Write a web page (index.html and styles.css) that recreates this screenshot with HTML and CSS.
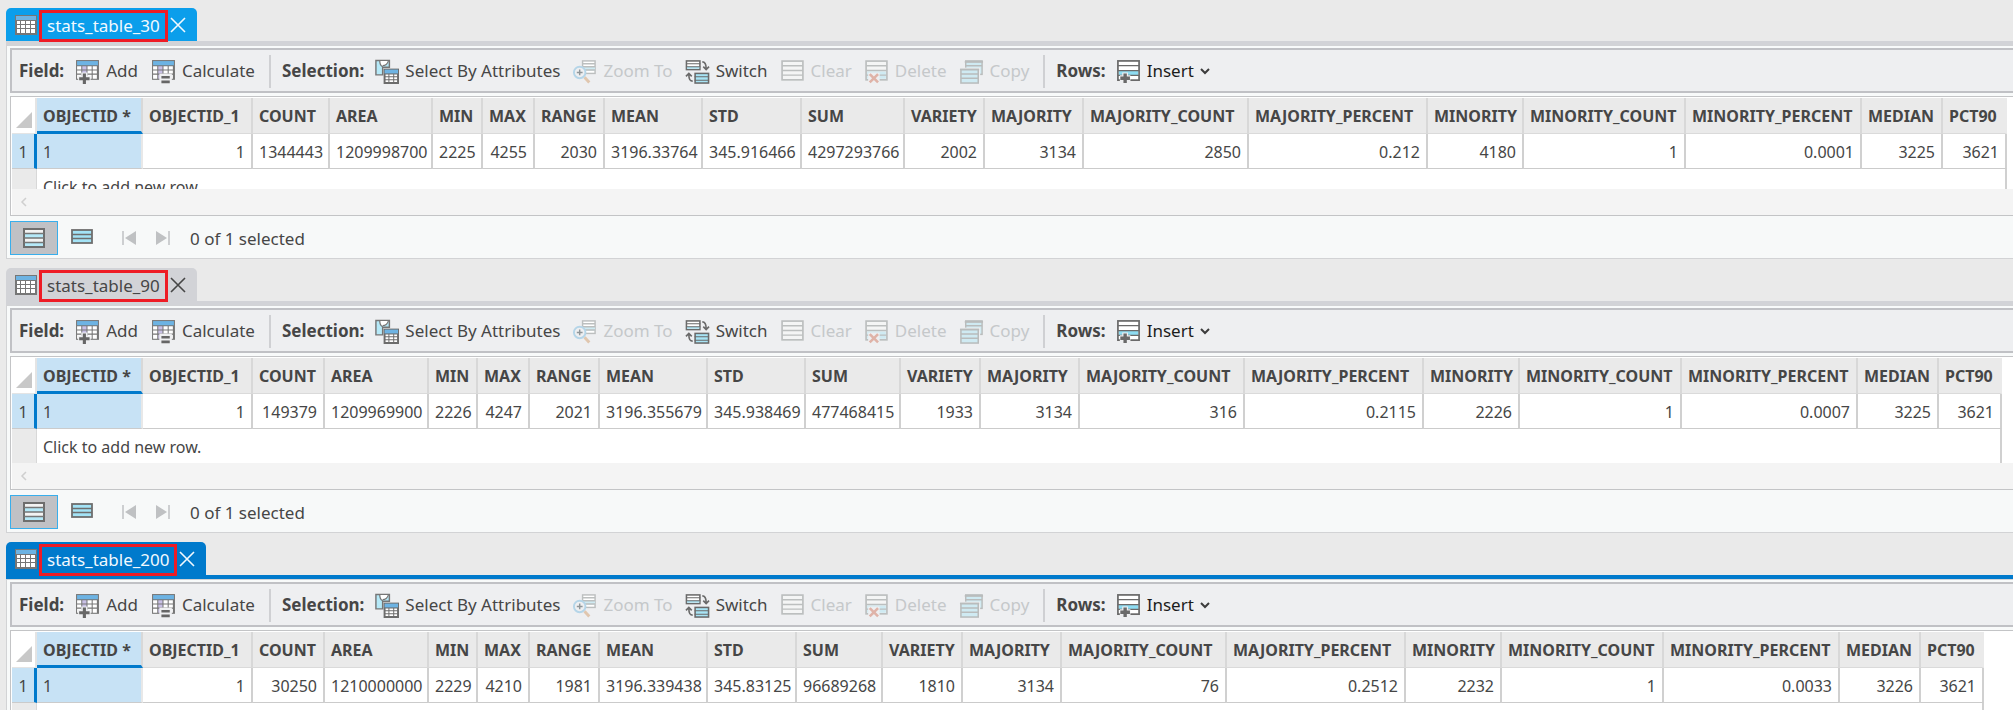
FILE: index.html
```html
<!DOCTYPE html>
<html lang="en">
<head>
<meta charset="utf-8">
<title>Attribute tables</title>
<link rel="stylesheet" href="styles.css">
</head>
<body>
<svg class="sprite" aria-hidden="true">
  <symbol id="i-table" viewBox="0 0 24 20">
    <rect x="1" y="0" width="22" height="20" fill="#767676"/>
    <rect x="2" y="1" width="20" height="4" fill="#6db3e3"/>
    <path d="M3 6h3v3H3zM7 6h4v3H7zM12 6h4v3h-4zM17 6h4v3h-4zM3 10h3v3H3zM7 10h4v3H7zM12 10h4v3h-4zM17 10h4v3h-4zM3 14h3v4H3zM7 14h4v4H7zM12 14h4v4h-4zM17 14h4v4h-4z" fill="#fff"/>
  </symbol>
  <symbol id="i-field" viewBox="0 0 24 24">
    <rect x="1" y="1" width="22" height="19" fill="#767676"/>
    <rect x="2" y="2" width="20" height="4" fill="#6db3e3"/>
    <path d="M2 7h4v3H2zM12 7h4v3h-4zM17 7h4v3h-4zM2 11h4v3H2zM12 11h4v3h-4zM17 11h4v3h-4zM2 15h4v4H2zM12 15h4v4h-4zM17 15h4v4h-4z" fill="#fff"/>
    <path d="M7 7h4v3H7zM7 11h4v3H7zM7 15h4v4H7z" fill="#c9c0e6"/>
  </symbol>
  <symbol id="i-add" viewBox="0 0 24 24">
    <use href="#i-field"/>
    <path d="M9 13v11M3 19h12" stroke="#eeeff1" stroke-width="6"/>
    <path d="M9 14v10M4 19h10" stroke="#666" stroke-width="3"/>
  </symbol>
  <symbol id="i-calc" viewBox="0 0 24 24">
    <use href="#i-field"/>
    <path d="M8 14h12v10H8z" fill="#eeeff1"/>
    <path d="M10 17.500h8M10 22h8" stroke="#666" stroke-width="2.500"/>
  </symbol>
  <symbol id="i-select" viewBox="0 0 26 26">
    <path d="M2 1.500h14v7H9v8H2z" fill="#b5e9f8" stroke="#767676" stroke-width="1.500"/>
    <path d="M6 2c0 5 3 6 5 5s4-2 4-5z" fill="#fff"/>
    <path d="M6 2c0 3 1 5 3 6M9 7c3 0 5-2 6-5" fill="none" stroke="#767676" stroke-width="1.300"/>
    <rect x="10" y="10" width="16" height="16" fill="#6c6c6c"/>
    <rect x="11" y="11" width="14" height="4" fill="#6db3e3"/>
    <path d="M12 16h3v2h-3zM16 16h4v2h-4zM21 16h3v2h-3zM12 19h3v2h-3zM16 19h4v2h-4zM21 19h3v2h-3zM12 22h3v2h-3zM16 22h4v2h-4zM21 22h3v2h-3z" fill="#fff"/>
  </symbol>
  <symbol id="i-zoom" viewBox="0 0 26 26">
    <rect x="11" y="2" width="13" height="13" fill="#fff" stroke="#bcbfbf" stroke-width="1.500"/>
    <path d="M11 8h13v4H11z" fill="#cfeaf2"/>
    <path d="M11 5h13M11 8h13M11 11.500h13" stroke="#bcbfbf" stroke-width="1.500"/>
    <circle cx="8" cy="14" r="6" fill="#eeeff1" stroke="#b5d5e8" stroke-width="2"/>
    <path d="M8 11v6M5 14h6" stroke="#8f9699" stroke-width="1.500"/>
    <path d="M13 19l5 5.500" stroke="#e0c6ae" stroke-width="3"/>
  </symbol>
  <symbol id="i-switch" viewBox="0 0 26 26">
    <rect x="1.500" y="2" width="14" height="9" fill="#fff" stroke="#6a6a6a" stroke-width="1.600"/>
    <path d="M2 8h13v2H2z" fill="#a8e4f5"/>
    <path d="M1 5h15M1 8h15" stroke="#6a6a6a" stroke-width="1.100"/>
    <rect x="10.500" y="15" width="14" height="10" fill="#a8e4f5" stroke="#6a6a6a" stroke-width="1.600"/>
    <path d="M10 18.500h15M10 22h15" stroke="#6a6a6a" stroke-width="1.100"/>
    <path d="M18 3c3 0 4 2 4 7M19 8l3 3 3-3M8 23c-3 0-4-2-4-7M1 18l3-3 3 3" fill="none" stroke="#6a6a6a" stroke-width="1.700"/>
  </symbol>
  <symbol id="i-clear" viewBox="0 0 24 24">
    <rect x="2" y="2" width="20" height="18" fill="#f4f5f5" stroke="#bcbfbf" stroke-width="1.600"/>
    <path d="M2 6.500h20M2 11h20M2 15.500h20" stroke="#bcbfbf" stroke-width="1.300"/>
  </symbol>
  <symbol id="i-delete" viewBox="0 0 24 24">
    <rect x="2" y="2" width="20" height="18" fill="#f4f5f5" stroke="#bcbfbf" stroke-width="1.600"/>
    <path d="M3 12h18v7H3z" fill="#cfeaf2"/>
    <path d="M2 6.500h20M2 11h20M2 15.500h20" stroke="#bcbfbf" stroke-width="1.300"/>
    <path d="M4 13h11v11H4z" fill="#eeeff1"/>
    <path d="M5.500 14.500l8 8M13.500 14.500l-8 8" stroke="#dfb3a8" stroke-width="2.500"/>
  </symbol>
  <symbol id="i-copy" viewBox="0 0 26 26">
    <rect x="7" y="2" width="17" height="14" fill="#cfeaf2" stroke="#b9bcbc" stroke-width="1.500"/>
    <path d="M6 3h19" stroke="#b9bcbc" stroke-width="2"/>
    <path d="M7 7h17" stroke="#b9bcbc" stroke-width="1.500"/>
    <rect x="0" y="9" width="22" height="17" fill="#eeeff1"/>
    <rect x="2" y="11" width="18" height="14" fill="#cfeaf2" stroke="#b9bcbc" stroke-width="1.600"/>
    <path d="M1 11h20M2 15.500h18M2 20h18" stroke="#b9bcbc" stroke-width="1.600"/>
  </symbol>
  <symbol id="i-insert" viewBox="0 0 26 26">
    <rect x="2" y="2" width="22" height="20" fill="#fff" stroke="#6a6a6a" stroke-width="1.800"/>
    <path d="M3 12.500h20v4.500H3z" fill="#8edcf2"/>
    <path d="M2 7h22M2 12h22M2 17h22" stroke="#6a6a6a" stroke-width="1.300"/>
    <path d="M9.500 14v12M4 20h11" stroke="#eeeff1" stroke-width="6"/>
    <path d="M9.500 15v10M4.500 20h10" stroke="#6a6a6a" stroke-width="3.500"/>
  </symbol>
  <symbol id="i-all" viewBox="0 0 24 20">
    <rect x="2" y="1" width="20" height="18" fill="#f3f3f3" stroke="#6e6e6e" stroke-width="2"/>
    <path d="M3 6h18v4H3zM3 15h18v3H3z" fill="#b5e9f8"/>
    <path d="M2 5.500h20M2 10h20M2 14.500h20" stroke="#767676" stroke-width="1.300"/>
  </symbol>
  <symbol id="i-selected" viewBox="0 0 24 20">
    <rect x="2" y="2" width="20" height="13" fill="#a3e3f6" stroke="#6e6e6e" stroke-width="1.800"/>
    <path d="M2 6.500h20M2 10.500h20" stroke="#6e6e6e" stroke-width="1.300"/>
  </symbol>
  <symbol id="i-first" viewBox="0 0 16 16">
    <path d="M15 1v14L4 8z" fill="#bfc1c3"/><path d="M2 1v14" stroke="#bfc1c3" stroke-width="1.500"/>
  </symbol>
  <symbol id="i-last" viewBox="0 0 16 16">
    <path d="M1 1v14l11-7z" fill="#bfc1c3"/><path d="M14 1v14" stroke="#bfc1c3" stroke-width="1.500"/>
  </symbol>
  <symbol id="i-close" viewBox="0 0 16 16">
    <path d="M1 1l14 14M15 1L1 15" stroke="currentColor" stroke-width="1.600"/>
  </symbol>
  <symbol id="i-down" viewBox="0 0 10 8">
    <path d="M1 2l4 4 4-4" fill="none" stroke="#3c3c3c" stroke-width="2"/>
  </symbol>
  <symbol id="i-left" viewBox="0 0 8 10">
    <path d="M6 1L2 5l4 4" fill="none" stroke="#cfcfcf" stroke-width="1.500"/>
  </symbol>
</svg>
<main class="views" id="views"></main>
<script src="script.js"></script>
</body>
</html>
```

FILE: styles.css
```css
* { box-sizing: border-box; }

body {
  margin: 0;
  padding: 8px 0 0 6px;
  height: 100vh;
  overflow: hidden;
  background: #eaeaea;
  color: #464646;
  font: 16px/22px "Noto Sans", "Open Sans", sans-serif;
}

button {
  border: 0;
  padding: 0;
  background: none;
  color: inherit;
  font: inherit;
}

svg { display: block; flex: none; }
.sprite { position: absolute; width: 0; height: 0; }

.views { display: flex; flex-direction: column; gap: 9px; height: 100%; }
.view { flex: none; }
.view:last-child { flex: 1; min-height: 0; overflow: hidden; }

/* Tab */
.tab {
  display: inline-flex;
  align-items: center;
  height: 33px;
  padding: 1px 11px 0 8px;
  border-radius: 5px 5px 0 0;
  background: #d2d3d7;
  vertical-align: top;
}
.tab-name {
  position: relative;
  margin: 2px 10px 0 9px;
  font-size: 17px;
  line-height: 24px;
}
.tab-name::after {
  content: "";
  position: absolute;
  inset: -4px -8px;
  border: 3px solid #ee1c25;
}
.tab-icon { width: 24px; height: 20px; }
.tab-close svg { width: 16px; height: 16px; }
.tab-strip { height: 4px; background: #d2d3d7; }
.is-hot .tab { background: #0b9eeb; color: #f2f9fe; }
.is-active .tab { background: #007acc; color: #f2f9fe; }
.is-active .tab-strip { background: #007acc; }

/* Panel */
.panel {
  padding: 2px 0 0 3px;
  border: 1px solid #d2d3d5;
  border-right: 0;
  background: #f8fafa;
}
.toolbar {
  display: flex;
  align-items: center;
  height: 45px;
  padding: 1px 0 0 7px;
  border: 2px solid #c0c1c5;
  border-right: 0;
  background: #eeeff1;
  font-size: 17px;
  white-space: nowrap;
}
.group { display: flex; align-items: center; gap: 13px; }
.group + .group {
  gap: 12px;
  margin-left: 14px;
  padding: 4px 0 4px 11px;
  border-left: 2px solid #cfd0d3;
}
.group-name { font-weight: 700; margin-right: -2px; }
.tool { display: flex; align-items: center; gap: 6px; }
.tool svg { width: 25px; height: 25px; }
.tool .arrow { width: 10px; height: 8px; }
.tool:disabled { color: #c5c8ca; }
.tool-dark { color: #1c1c1c; }

/* Grid */
.grid {
  margin-top: 3px;
  padding: 1px 0 0 1px;
  border: 1px solid #c3c4c6;
  border-right: 0;
  background: #fff;
}
.rows { height: 91px; overflow: hidden; }
.is-tall .rows { height: 105px; }
table { border-collapse: separate; border-spacing: 0; table-layout: fixed; width: 0; }
th, td {
  height: 35px;
  padding: 1px 6px 0;
  border-right: 1px solid #d0d0d0;
  border-bottom: 1px solid #cbcbcb;
  text-align: right;
  white-space: nowrap;
}
td { border-right-width: 2px; }
thead th {
  height: 36px;
  background: #eaeaea;
  border-bottom-color: #dadada;
  border-right: 2px solid #d8d8d8;
  text-align: left;
  font-weight: 700;
}
thead th:last-child { border-right-color: #eaeaea; }
thead .corner { background: #fff; padding: 0 4px 5px; vertical-align: bottom; border-color: #e4e4e4; }
.corner svg { margin-left: auto; width: 16px; height: 16px; }
thead .current { background: #c7e2f5; padding-top: 3px; border-bottom: 3px solid #007acc; }
td.current { background: #c7e2f5; text-align: left; border-right-color: #e8e8e8; }
tbody th {
  padding: 1px 0 0;
  border-right: 3px solid #007acc;
  background: #c7e2f5;
  text-align: center;
  font-weight: 400;
}
tbody .blank { background: #eaeaea; border-right: 1px solid #d8d8d8; }
td.new-row { text-align: left; }
.scroll { display: flex; align-items: center; height: 26px; padding-left: 8px; background: #f4f4f4; }
.scroll svg { width: 8px; height: 10px; }

/* Footer */
.footer { display: flex; align-items: center; padding: 5px 0 3px; background: #f7f9f9; }
.mode { display: grid; place-items: center; width: 48px; height: 34px; }
.mode svg { width: 24px; height: 20px; }
.mode[aria-pressed="true"] { border: 1px solid #38aeec; background: #c0c1c5; }
.nav { margin-left: 18px; }
.nav svg { width: 16px; height: 16px; }
.mode + .nav { margin-left: 15px; }
.count { margin: 2px 0 0 19px; font-size: 17px; }
```

FILE: script.js
```js
const FIELDS = ["OBJECTID *", "OBJECTID_1", "COUNT", "AREA", "MIN", "MAX", "RANGE", "MEAN", "STD", "SUM",
  "VARIETY", "MAJORITY", "MAJORITY_COUNT", "MAJORITY_PERCENT", "MINORITY", "MINORITY_COUNT",
  "MINORITY_PERCENT", "MEDIAN", "PCT90"];

const TABLES = [
  { name: "stats_table_30", state: "is-hot", prompt: "Click to add new row.", footer: true,
    widths: [106, 110, 77, 103, 50, 52, 70, 98, 99, 103, 80, 99, 165, 179, 96, 162, 176, 81, 64],
    row: ["1", "1", "1344443", "1209998700", "2225", "4255", "2030", "3196.33764", "345.916466", "4297293766",
      "2002", "3134", "2850", "0.212", "4180", "1", "0.0001", "3225", "3621"] },
  { name: "stats_table_90", state: "is-tall", prompt: "Click to add new row.", footer: true,
    widths: [106, 110, 72, 104, 49, 52, 70, 108, 98, 95, 80, 99, 165, 179, 96, 162, 176, 81, 63],
    row: ["1", "1", "149379", "1209969900", "2226", "4247", "2021", "3196.355679", "345.938469", "477468415",
      "1933", "3134", "316", "0.2115", "2226", "1", "0.0007", "3225", "3621"] },
  { name: "stats_table_200", state: "is-active", prompt: "", footer: false,
    widths: [106, 110, 72, 104, 49, 52, 70, 108, 89, 86, 80, 99, 165, 179, 96, 162, 176, 81, 63],
    row: ["1", "1", "30250", "1210000000", "2229", "4210", "1981", "3196.339438", "345.83125", "96689268",
      "1810", "3134", "76", "0.2512", "2232", "1", "0.0033", "3226", "3621"] }
];

const icon = (id, cls = "") => `<svg class="${cls}" aria-hidden="true"><use href="#i-${id}"/></svg>`;
const tool = (id, label, off) =>
  `<button class="tool" type="button"${off ? " disabled" : ""}>${icon(id)}<span>${label}</span></button>`;

const toolbar = `
  <div class="toolbar" role="toolbar">
    <div class="group"><span class="group-name">Field:</span>
      ${tool("add", "Add")}${tool("calc", "Calculate")}</div>
    <div class="group"><span class="group-name">Selection:</span>
      ${tool("select", "Select By Attributes")}${tool("zoom", "Zoom To", true)}${tool("switch", "Switch")}
      ${tool("clear", "Clear", true)}${tool("delete", "Delete", true)}${tool("copy", "Copy", true)}</div>
    <div class="group"><span class="group-name">Rows:</span>
      <button class="tool tool-dark" type="button">${icon("insert")}<span>Insert</span>${icon("down", "arrow")}</button></div>
  </div>`;

const grid = t => `
  <div class="grid">
    <div class="rows"><table>
      <colgroup><col style="width:25px">${t.widths.map(w => `<col style="width:${w}px">`).join("")}</colgroup>
      <thead><tr><th class="corner"><svg viewBox="0 0 16 16" aria-hidden="true"><path d="M16 0v16H0z" fill="#c8c8c8"/></svg></th>
        ${FIELDS.map((f, i) => `<th scope="col"${i ? "" : ' class="current"'}>${f}</th>`).join("")}</tr></thead>
      <tbody>
        <tr><th scope="row">1</th>${t.row.map((v, i) => `<td${i ? "" : ' class="current"'}>${v}</td>`).join("")}</tr>
        <tr><th class="blank"></th><td class="new-row" colspan="${FIELDS.length}">${t.prompt}</td></tr>
      </tbody>
    </table></div>
    ${t.footer ? `<div class="scroll">${icon("left")}</div>` : ""}
  </div>`;

const footer = `
  <div class="footer">
    <button class="mode" type="button" aria-pressed="true" aria-label="Show all records">${icon("all")}</button>
    <button class="mode" type="button" aria-pressed="false" aria-label="Show selected records">${icon("selected")}</button>
    <button class="nav" type="button" aria-label="First record">${icon("first")}</button>
    <button class="nav" type="button" aria-label="Last record">${icon("last")}</button>
    <span class="count">0 of 1 selected</span>
  </div>`;

document.getElementById("views").innerHTML = TABLES.map(t => `
  <section class="view ${t.state}">
    <div class="tab">${icon("table", "tab-icon")}<span class="tab-name">${t.name}</span>
      <button class="tab-close" type="button" aria-label="Close ${t.name}">${icon("close")}</button></div>
    <div class="tab-strip"></div>
    <div class="panel">${toolbar}${grid(t)}${t.footer ? footer : ""}</div>
  </section>`).join("");
```
